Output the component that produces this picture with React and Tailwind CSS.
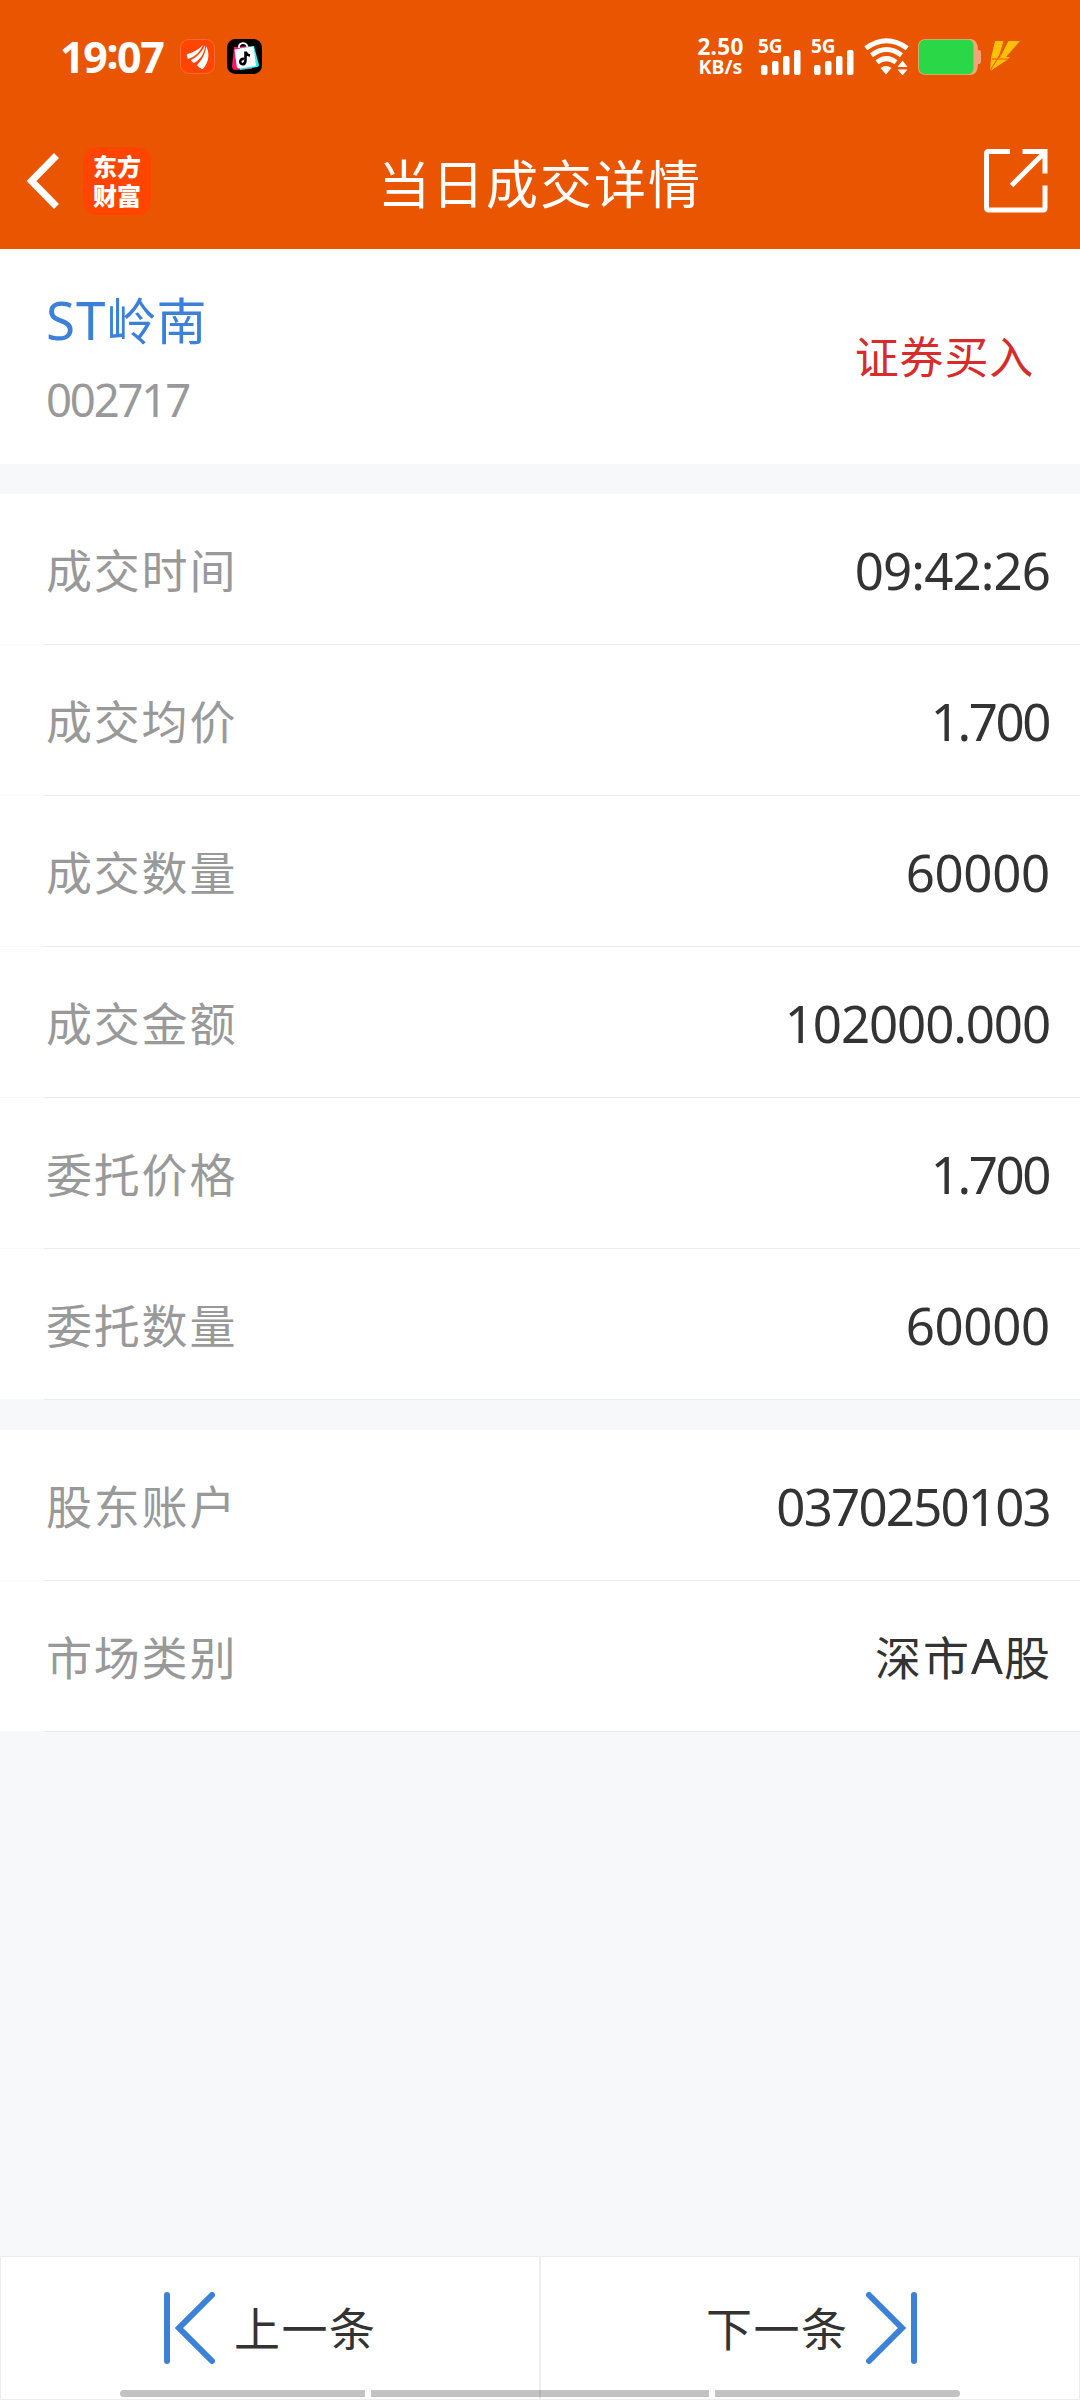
const trade = [
  ['成交时间', '09:42:26', 'tracking-[-0.9px]'],
  ['成交均价', '1.700', 'tracking-[-2.4px] pr-[1px]'],
  ['成交数量', '60000', 'tracking-[-0.3px]'],
  ['成交金额', '102000.000', 'tracking-[-1.1px]'],
  ['委托价格', '1.700', 'tracking-[-2.4px] pr-[1px]'],
  ['委托数量', '60000', 'tracking-[-0.3px]'],
];

function Signal() {
  return (
    <div className="flex w-[42px] flex-col">
      <span className="h-[15px] text-[19px] leading-[15px] font-bold">5G</span>
      <svg className="-mt-[4px] ml-[3px] h-[25px] w-[40px]" viewBox="0 0 40 25" fill="currentColor">
        <rect x="0" y="15" width="6.5" height="10" rx="2" />
        <rect x="11" y="11" width="6.5" height="14" rx="2" />
        <rect x="22" y="6" width="6.5" height="19" rx="2" />
        <rect x="33" y="0" width="6.5" height="25" rx="2" />
      </svg>
    </div>
  );
}

function StatusBar() {
  return (
    <div className="flex h-[113px] items-center pl-[60px] font-['Noto_Sans',sans-serif]">
      <span className="flex w-[106px] text-[43px] leading-none font-bold tracking-[-1.4px]">
        19<span className="-mt-[4px]">:</span>07
      </span>
      <svg className="ml-[14px] size-[35px]" viewBox="0 0 35 35">
        <rect x=".5" y=".5" width="34" height="34" rx="8.5" fill="#ff4500" stroke="#ff6a35" />
        <g fill="#fff">
          <path d="M7 15C12 14 18 11 23 6C20 13 15 18 8 20C7 18 6.500 16 7 15Z" />
          <path d="M11 21C17 18 22 13 25 6C25 14 20 21 14 24C12 23 11 22 11 21Z" />
          <path d="M17 26C22 21 26 14 26 7C30 14 29 23 23 30C21 30 18 28 17 26Z" />
        </g>
      </svg>
      <svg className="ml-[12px] size-[35px]" viewBox="0 0 35 35">
        <rect width="35" height="35" rx="8.500" fill="#000" />
        <path d="M7 8l16-1 2 23-17 1Q5 30 5 27Z" fill="#ff1764" />
        <path d="M13 9l14-2 5 19q0 2-2 2l-17 3Z" fill="#24f0ec" />
        <path d="M7.500 10.500l19-3 2.500 19.500-17 2.500q-2 0-2.200-2Z" fill="#fff" />
        <path d="M12 9Q11.500 4.800 15.500 4.200Q19.500 4 20.500 8" fill="none" stroke="#fff" strokeWidth="1.800" />
        <path d="M18.500 12.500V21.500Q18 25.500 15.500 25.300Q12.500 24.500 13.500 21.500Q14.500 19.500 17 20M18.800 13Q19.500 16 23 16.500" fill="none" stroke="#000" strokeWidth="2.600" />
      </svg>

      <div className="ml-[435px] flex w-[47px] flex-col items-center font-bold">
        <span className="text-[22.500px] leading-[20px] tracking-[0.300px]">2.50</span>
        <span className="text-[19.500px] leading-[19px]">KB/s</span>
      </div>
      <div className="ml-[14px] flex">
        <Signal />
        <div className="ml-[11px]"><Signal /></div>
      </div>
      <svg className="ml-[11px] h-[37px] w-[45px]" viewBox="0 0 45 37" fill="none">
        <g stroke="#fff" strokeWidth="5">
          <path d="M1.800 10.200Q22.500-4.800 43.200 10.200" />
          <path d="M7.500 17.200Q22.500 5.800 37.500 17.200" />
          <path d="M13 24.300Q22.500 17 32 24.300" />
        </g>
        <path d="M16.500 30q5.500-4 11 0l-5.500 6.500ZM38.500 22.500l5 6.500h-10ZM33.500 31.500h10l-5 6Z" fill="#fff" />
      </svg>
      <svg className="ml-[9px] h-[36px] w-[64px]" viewBox="0 0 64 36">
        <path d="M8 0H53Q60 1 60 11H61Q63 11 63 14V22Q63 25 61 25H60Q60 35 53 36H8Q0 36 0 28V8Q0 0 8 0Z" fill="#f5a47a" />
        <path d="M8 .7H50Q55.500 .7 55.500 8V28Q55.500 35.300 50 35.300H8Q.8 35 .8 28V8Q.8 1 8 .7Z" fill="#2ad847" />
      </svg>
      <svg className="ml-[8px] h-[31px] w-[31px]" viewBox="0 0 31 31" fill="#ffc107">
        <path d="M5 0H14L10 17H20L0 30L1 17Z" />
        <path d="M18 0H30L16 16H20L0 30L10 17Z" />
        <path d="M14 0L9 17M2 18H20M0 30L18 0" stroke="#e95500" strokeWidth="1" fill="none" />
      </svg>
    </div>
  );
}

function NavBar() {
  return (
    <div className="grid h-[136px] grid-cols-3 items-center">
      <div className="flex items-center">
        <svg className="ml-[26px] h-[56px] w-[34px]" viewBox="0 0 34 56" fill="none" stroke="#fff" strokeWidth="7">
          <path d="M30.500 2.500L5.500 28L30.500 53.500" />
        </svg>
        <div className="ml-[23px] flex h-[68px] w-[68px] flex-col items-center rounded-[14px] bg-[#ff4500] pt-[4px] text-[24px] leading-[29px] font-black">
          <span>东方</span>
          <span>财富</span>
        </div>
      </div>
      <h1 className="pt-px text-center text-[52px] leading-none font-normal tracking-[2px] whitespace-nowrap">当日成交详情</h1>
      <svg className="mr-[32px] h-[64px] w-[64px] justify-self-end" viewBox="0 0 64 64" fill="none" stroke="#fff" strokeWidth="5">
        <path d="M26 2.500H4.500Q2.500 2.500 2.500 4.500V58.500Q2.500 61 5 61H59Q61 61 61 59V36.500" />
        <path d="M38.500 2.500H61V24.500M59.500 4.500L27.500 36.500" />
      </svg>
    </div>
  );
}

function Row({ label, children }) {
  return (
    <div className="h-[151px] bg-white">
      <div className="flex h-[150px] items-center justify-between pr-[30px] pl-[46px]">
        <span className="pb-[3px] text-[46px] leading-none tracking-[1.800px] text-[#999]">{label}</span>
        {children}
      </div>
      <div className="flex h-px bg-[#f9f9f9] pl-[44px]"><div className="flex-1 bg-[#ebebeb]" /></div>
    </div>
  );
}

function Figure({ spacing, children }) {
  return <span className={`pt-[2px] font-['Noto_Sans',sans-serif] text-[51px] leading-none text-[#333] ${spacing}`}>{children}</span>;
}

export default function App() {
  return (
    <div className="flex h-[2400px] w-[1080px] flex-col overflow-hidden bg-[#f6f8fa] font-['Noto_Sans_CJK_SC',sans-serif]">
      <header className="h-[249px] bg-[#e95500] text-white">
        <StatusBar />
        <NavBar />
      </header>

      <section className="flex h-[215px] items-center justify-between bg-white pt-[4px] pr-[46px] pl-[46px]">
        <div>
          <div className="flex h-[80px] text-[50px] leading-[80px] text-[#3b80d9]">
            <span className="pt-[2px] font-['Noto_Sans',sans-serif] text-[53px] tracking-[1px]">ST</span>
            <span>岭南</span>
          </div>
          <div className="pt-px font-['Noto_Sans',sans-serif] text-[45.500px] leading-[80px] tracking-[-2.200px] text-[#999]">002717</div>
        </div>
        <span className="pb-[7px] text-[44px] leading-none tracking-[0.800px] text-[#d82b2b]">证券买入</span>
      </section>

      <section className="mt-[30px]">
        {trade.map(([label, value, spacing]) => (
          <Row key={label} label={label}><Figure spacing={spacing}>{value}</Figure></Row>
        ))}
      </section>
      <section className="mt-[30px]">
        <Row label="股东账户"><Figure spacing="tracking-[-1.8px]">0370250103</Figure></Row>
        <Row label="市场类别">
          <span className="flex items-center pb-[2px] text-[46px] leading-none text-[#333]">
            <span className="tracking-[2px]">深市</span>
            <span className="font-['Noto_Sans',sans-serif] text-[50px]">A</span>
            <span className="pl-[1px]">股</span>
          </span>
        </Row>
      </section>

      <footer className="relative mt-auto grid h-[144px] grid-cols-2 text-[46px] leading-none text-[#333]">
        <button className="flex items-center border border-[#ededed] bg-white pl-[163px]">
          <svg className="h-[72px] w-[51px]" viewBox="0 0 51 72" fill="none" stroke="#3b80d9" strokeWidth="6" strokeLinecap="round">
            <path d="M3 3V69M48 3L15 36L48 69" />
          </svg>
          <span className="ml-[19px] pb-[4px] tracking-[1.500px]">上一条</span>
        </button>
        <button className="flex items-center border border-[#ededed] bg-white pl-[165px]">
          <span className="pb-[4px] tracking-[1.500px]">下一条</span>
          <svg className="ml-[17px] h-[72px] w-[51px]" viewBox="0 0 51 72" fill="none" stroke="#3b80d9" strokeWidth="6" strokeLinecap="round">
            <path d="M48 3V69M3 3L36 36L3 69" />
          </svg>
        </button>
        <div className="absolute bottom-[3px] left-[120px] flex h-[7px] w-[840px] gap-[6px]">
          <div className="w-[245px] rounded-l-full bg-black/24" />
          <div className="w-[338px] bg-black/24" />
          <div className="flex-1 rounded-r-full bg-black/24" />
        </div>
      </footer>
    </div>
  );
}
